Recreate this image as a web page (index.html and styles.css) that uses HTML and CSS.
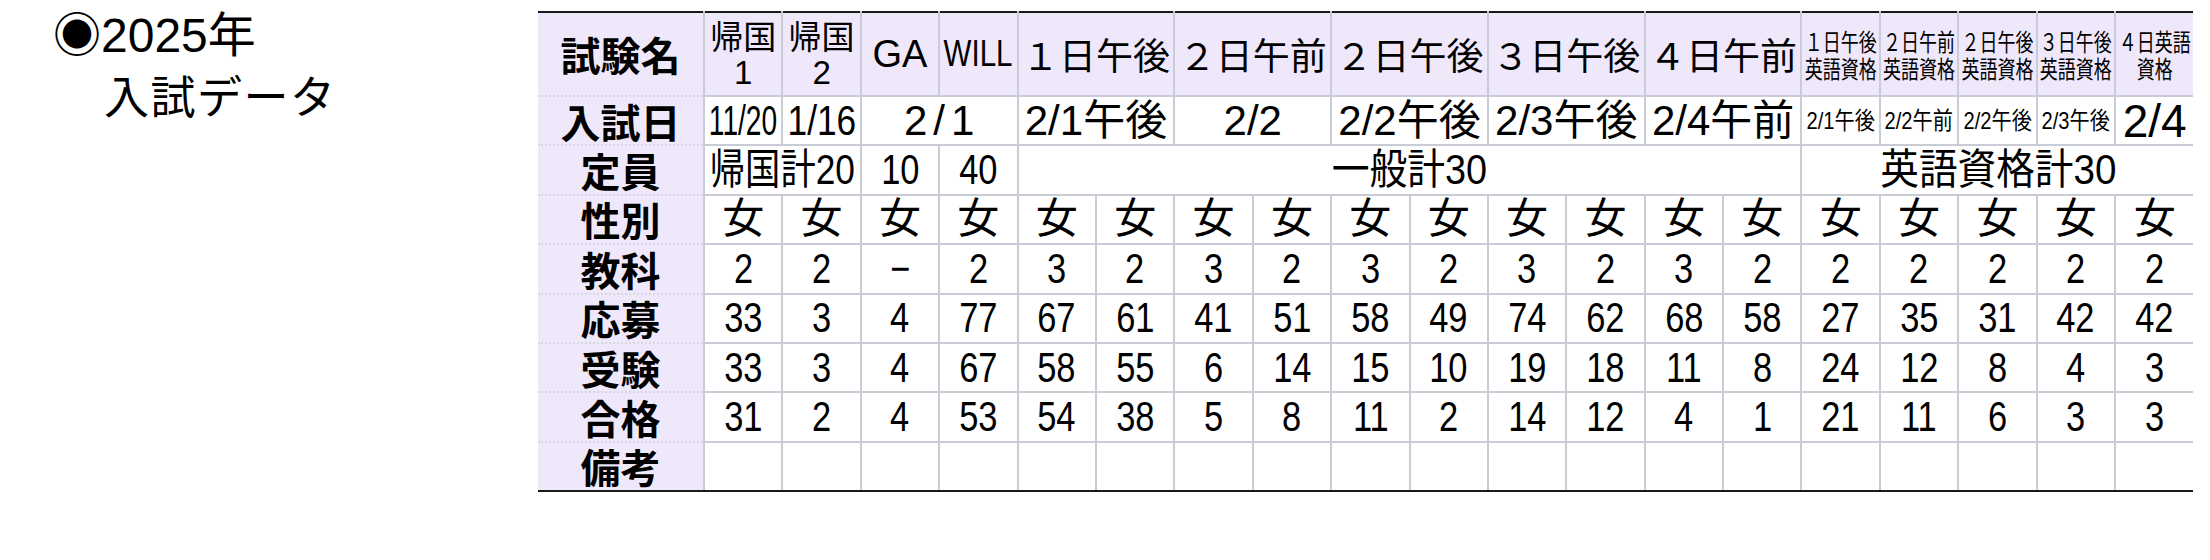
FILE: index.html
```html
<!DOCTYPE html>
<html lang="ja">
<head>
<meta charset="utf-8">
<title>2025年 入試データ</title>
<link rel="stylesheet" href="styles.css">
</head>
<body>
<div class="page">
  <div class="title">
    <div class="l1">◉2025年</div>
    <div class="l2">入試データ</div>
  </div>
  <table class="exam">
    <colgroup>
      <col class="c-lbl">
      <col class="c"><col class="c"><col class="c"><col class="c">
      <col class="c"><col class="c"><col class="c"><col class="c"><col class="c">
      <col class="c"><col class="c"><col class="c"><col class="c"><col class="c">
      <col class="c"><col class="c"><col class="c"><col class="c"><col class="c">
    </colgroup>
    <tr class="hd">
      <th class="lbl">試験名</th>
      <th class="two">帰国<br><span class="lat">1</span></th>
      <th class="two">帰国<br><span class="lat">2</span></th>
      <th class="ga">GA</th>
      <th class="will"><div class="fit"><span class="sq s82">WILL</span></div></th>
      <th colspan="2">１日午後</th>
      <th colspan="2">２日午前</th>
      <th colspan="2">２日午後</th>
      <th colspan="2">３日午後</th>
      <th colspan="2">４日午前</th>
      <th class="sm"><div class="fit"><span class="sq"><span class="ln">１日午後</span><span class="ln">英語資格</span></span></div></th>
      <th class="sm"><div class="fit"><span class="sq"><span class="ln">２日午前</span><span class="ln">英語資格</span></span></div></th>
      <th class="sm"><div class="fit"><span class="sq"><span class="ln">２日午後</span><span class="ln">英語資格</span></span></div></th>
      <th class="sm"><div class="fit"><span class="sq"><span class="ln">３日午後</span><span class="ln">英語資格</span></span></div></th>
      <th class="sm"><div class="fit"><span class="sq"><span class="ln">４日英語</span><span class="ln">資格</span></span></div></th>
    </tr>
    <tr>
      <th class="lbl">入試日</th>
      <td><div class="fit"><span class="sq s67">11/20</span></div></td>
      <td><div class="fit"><span class="sq s84">1/16</span></div></td>
      <td colspan="2" class="wide">2/1</td>
      <td colspan="2">2/1午後</td>
      <td colspan="2">2/2</td>
      <td colspan="2">2/2午後</td>
      <td colspan="2">2/3午後</td>
      <td colspan="2">2/4午前</td>
      <td class="date-sm"><div class="fit"><span class="sq s84">2/1午後</span></div></td>
      <td class="date-sm"><div class="fit"><span class="sq s84">2/2午前</span></div></td>
      <td class="date-sm"><div class="fit"><span class="sq s84">2/2午後</span></div></td>
      <td class="date-sm"><div class="fit"><span class="sq s84">2/3午後</span></div></td>
      <td class="big">2/4</td>
    </tr>
    <tr>
      <th class="lbl">定員</th>
      <td colspan="2"><div class="fit"><span class="sq s84">帰国計20</span></div></td>
      <td><span class="n">10</span></td>
      <td><span class="n">40</span></td>
      <td colspan="10"><div class="fit"><span class="sq s90">一般計30</span></div></td>
      <td colspan="5"><div class="fit"><span class="sq s92">英語資格計30</span></div></td>
    </tr>
    <tr>
      <th class="lbl">性別</th>
      <td>女</td><td>女</td><td>女</td><td>女</td><td>女</td>
      <td>女</td><td>女</td><td>女</td><td>女</td><td>女</td>
      <td>女</td><td>女</td><td>女</td><td>女</td><td>女</td>
      <td>女</td><td>女</td><td>女</td><td>女</td>
    </tr>
    <tr>
      <th class="lbl">教科</th>
      <td><span class="n">2</span></td><td><span class="n">2</span></td><td><span class="n">−</span></td><td><span class="n">2</span></td><td><span class="n">3</span></td>
      <td><span class="n">2</span></td><td><span class="n">3</span></td><td><span class="n">2</span></td><td><span class="n">3</span></td><td><span class="n">2</span></td>
      <td><span class="n">3</span></td><td><span class="n">2</span></td><td><span class="n">3</span></td><td><span class="n">2</span></td><td><span class="n">2</span></td>
      <td><span class="n">2</span></td><td><span class="n">2</span></td><td><span class="n">2</span></td><td><span class="n">2</span></td>
    </tr>
    <tr>
      <th class="lbl">応募</th>
      <td><span class="n">33</span></td><td><span class="n">3</span></td><td><span class="n">4</span></td><td><span class="n">77</span></td><td><span class="n">67</span></td>
      <td><span class="n">61</span></td><td><span class="n">41</span></td><td><span class="n">51</span></td><td><span class="n">58</span></td><td><span class="n">49</span></td>
      <td><span class="n">74</span></td><td><span class="n">62</span></td><td><span class="n">68</span></td><td><span class="n">58</span></td><td><span class="n">27</span></td>
      <td><span class="n">35</span></td><td><span class="n">31</span></td><td><span class="n">42</span></td><td><span class="n">42</span></td>
    </tr>
    <tr>
      <th class="lbl">受験</th>
      <td><span class="n">33</span></td><td><span class="n">3</span></td><td><span class="n">4</span></td><td><span class="n">67</span></td><td><span class="n">58</span></td>
      <td><span class="n">55</span></td><td><span class="n">6</span></td><td><span class="n">14</span></td><td><span class="n">15</span></td><td><span class="n">10</span></td>
      <td><span class="n">19</span></td><td><span class="n">18</span></td><td><span class="n">11</span></td><td><span class="n">8</span></td><td><span class="n">24</span></td>
      <td><span class="n">12</span></td><td><span class="n">8</span></td><td><span class="n">4</span></td><td><span class="n">3</span></td>
    </tr>
    <tr>
      <th class="lbl">合格</th>
      <td><span class="n">31</span></td><td><span class="n">2</span></td><td><span class="n">4</span></td><td><span class="n">53</span></td><td><span class="n">54</span></td>
      <td><span class="n">38</span></td><td><span class="n">5</span></td><td><span class="n">8</span></td><td><span class="n">11</span></td><td><span class="n">2</span></td>
      <td><span class="n">14</span></td><td><span class="n">12</span></td><td><span class="n">4</span></td><td><span class="n">1</span></td><td><span class="n">21</span></td>
      <td><span class="n">11</span></td><td><span class="n">6</span></td><td><span class="n">3</span></td><td><span class="n">3</span></td>
    </tr>
    <tr class="last">
      <th class="lbl">備考</th>
      <td></td><td></td><td></td><td></td><td></td>
      <td></td><td></td><td></td><td></td><td></td>
      <td></td><td></td><td></td><td></td><td></td>
      <td></td><td></td><td></td><td></td>
    </tr>
  </table>
</div>
</body>
</html>
```

FILE: styles.css
```css
html, body {
  margin: 0;
  padding: 0;
  background: #ffffff;
  color: #000000;
  font-family: "Noto Sans CJK JP", sans-serif;
}

.page {
  display: flex;
  align-items: flex-start;
}

.title {
  width: 485px;
  padding-left: 53px;
  padding-top: 6px;
  font-family: "Liberation Sans", "Noto Sans CJK JP", sans-serif;
  white-space: nowrap;
}

.title .l1 {
  font-size: 48px;
  line-height: 60px;
}

.title .l2 {
  padding-left: 51px;
  font-family: "Noto Sans CJK JP", sans-serif;
  font-size: 45px;
  line-height: 58px;
  letter-spacing: 1.5px;
}

.exam {
  margin-top: 11px;
  border-collapse: collapse;
  table-layout: fixed;
  width: 1655px;
}

.exam .c-lbl { width: 166px; }
.exam .c { width: 78.4px; }

.exam th,
.exam td {
  padding: 0;
  text-align: center;
  vertical-align: middle;
  border: 2px solid #c8ccd6;
  font-weight: normal;
  white-space: nowrap;
  line-height: 1;
}

.exam tr > :first-child { border-left: none; }
.exam tr > :last-child { border-right: none; }

.exam tr {
  height: 49.4px;
}

.exam tr.hd {
  height: 84px;
}

.exam tr.hd > * {
  border-top: 2px solid #1a1a1a;
  background: #efe8fb;
  font-size: 37px;
}

.exam tr.last > * {
  border-bottom: 2px solid #1a1a1a;
}

.exam .lbl {
  background: #efe8fb;
  font-weight: 700;
  font-size: 40px;
  border-bottom: 2px dotted #d6d6de;
  border-top: 2px dotted #d6d6de;
}

.exam tr.hd > .lbl {
  border-top: 2px solid #1a1a1a;
  font-size: 40px;
}

.exam tr.last > .lbl {
  border-bottom: 2px solid #1a1a1a;
}

.exam td {
  font-family: "Liberation Sans", "Noto Sans CJK JP", sans-serif;
  font-size: 42px;
}

.exam td .n {
  display: inline-block;
  transform: scaleX(0.82);
}

.exam .hd .two {
  font-size: 33px;
  line-height: 35px;
}

.exam .hd .two .lat {
  font-family: "Liberation Sans", sans-serif;
}

.exam .hd .ga {
  font-family: "Liberation Sans", sans-serif;
  font-size: 38px;
}

.exam .hd .will {
  font-family: "Liberation Sans", sans-serif;
  font-size: 36px;
}

.fit {
  display: flex;
  justify-content: center;
  align-items: center;
}

.sq {
  flex: none;
  display: inline-block;
  transform-origin: center center;
}

.s67 { transform: scaleX(0.67); }
.s82 { transform: scaleX(0.82); }
.s84 { transform: scaleX(0.84); }
.s90 { transform: scaleX(0.9); }
.s92 { transform: scaleX(0.92); }

.exam .hd .sm .sq {
  display: flex;
  flex-direction: column;
  align-items: center;
  font-size: 18px;
  transform: scaleY(1.35);
}

.exam .hd .sm .ln {
  display: block;
  height: 20px;
  line-height: 20px;
}

.exam .date-sm {
  font-size: 24px;
}

.exam .wide {
  letter-spacing: 6px;
  text-indent: 6px;
}

.exam .big {
  font-family: "Liberation Sans", sans-serif;
  font-size: 46px;
}
```
